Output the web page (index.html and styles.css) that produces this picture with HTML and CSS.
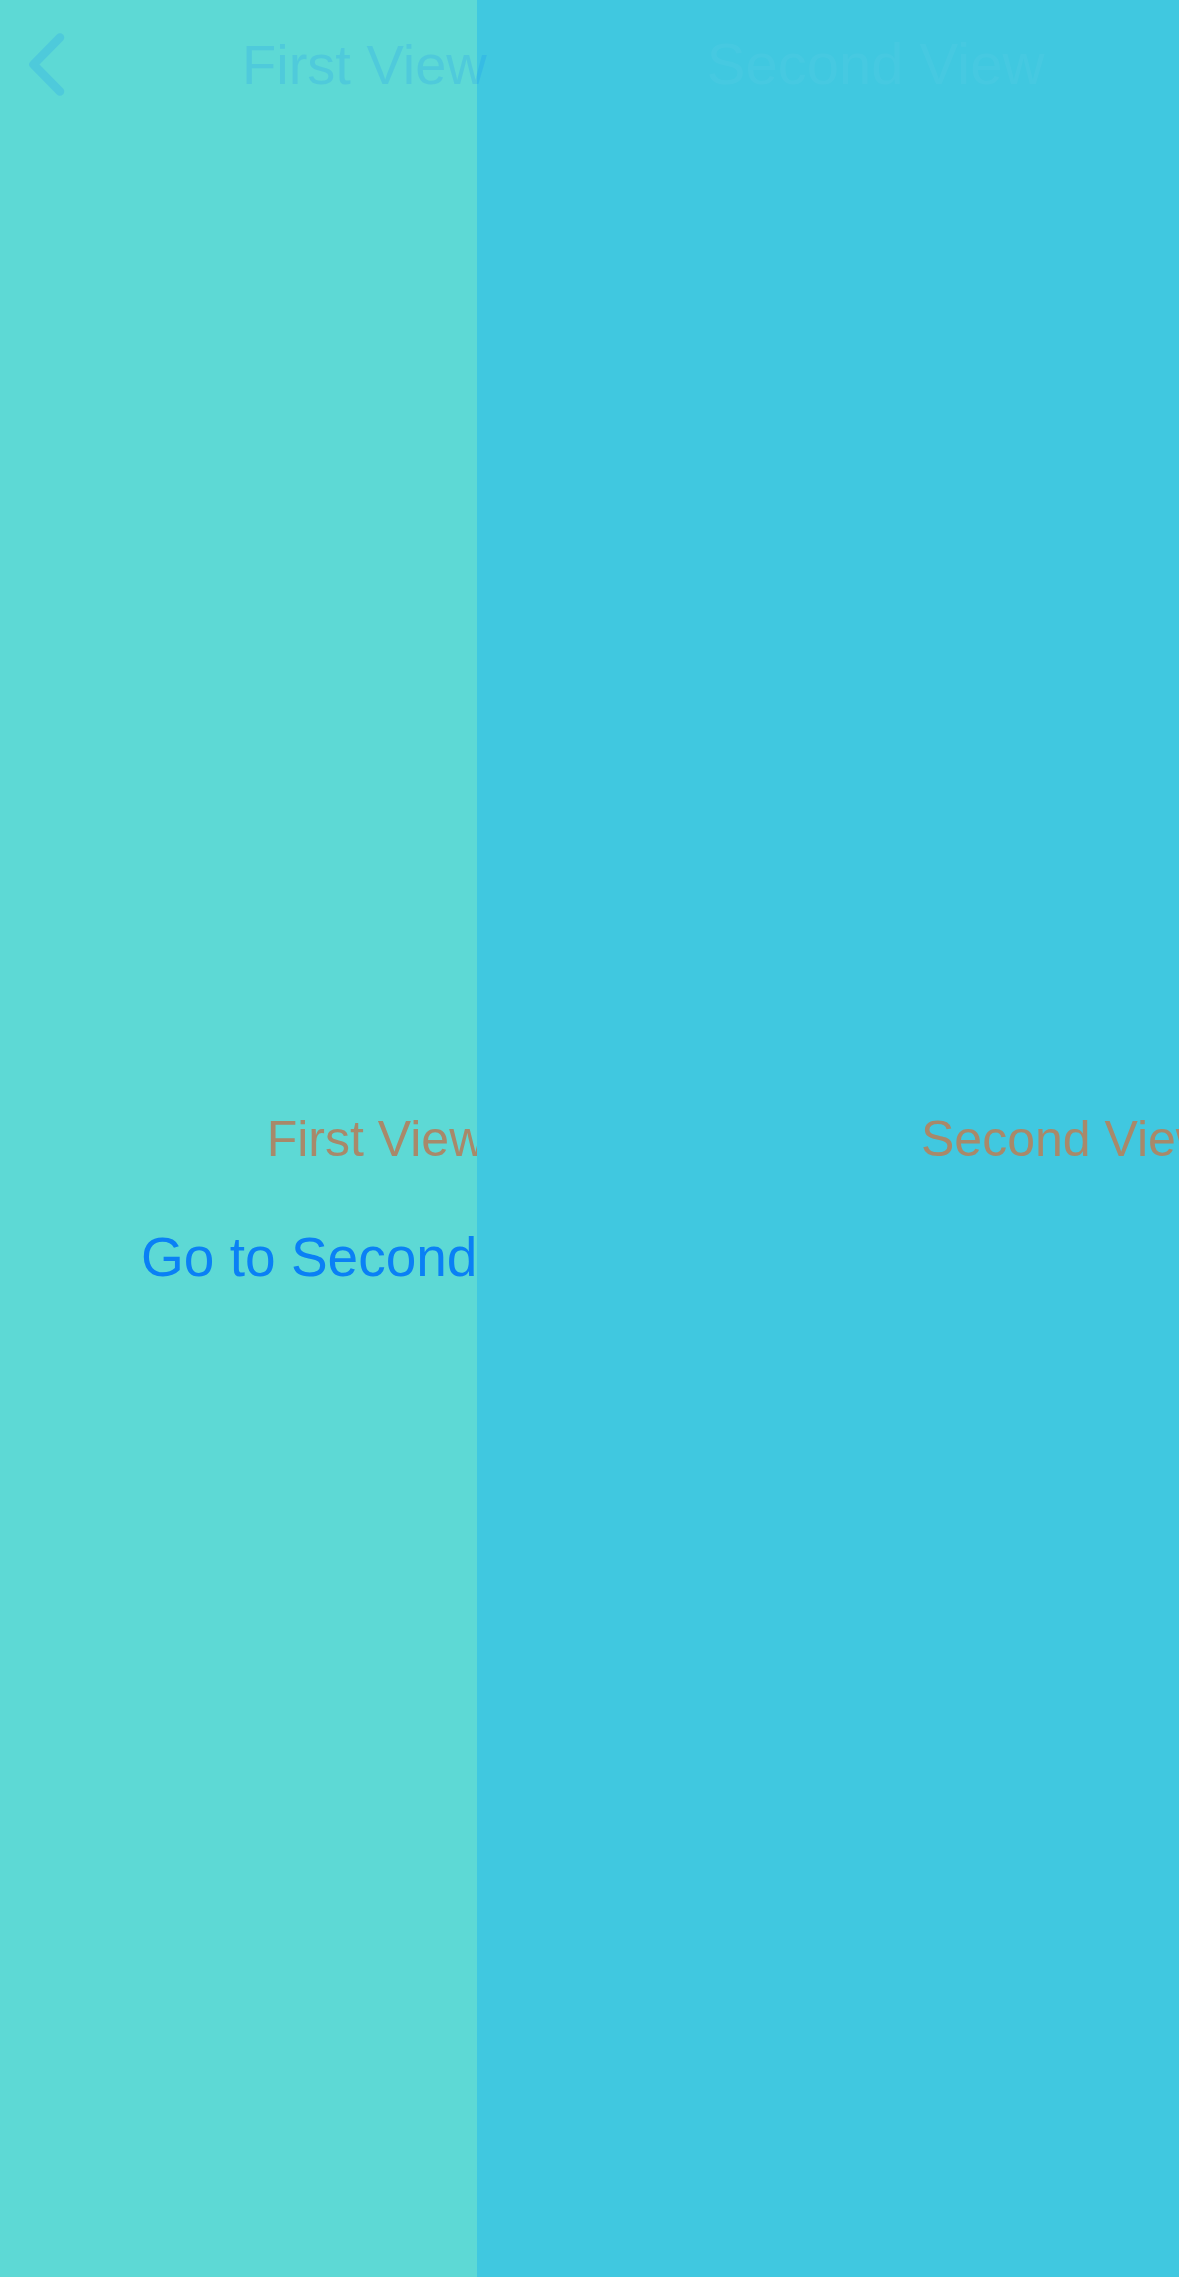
FILE: index.html
```html
<!DOCTYPE html>
<html lang="en">
<head>
<meta charset="utf-8">
<title>Navigation transition</title>
<link rel="stylesheet" href="styles.css">
</head>
<body>
<div class="screen">
  <div class="pane pane-first">
    <div class="view view-first">
      <div class="label">First View</div>
      <div class="button">Go to Second View</div>
    </div>
  </div>
  <div class="pane pane-second">
    <div class="view view-second">
      <div class="label">Second View</div>
    </div>
  </div>
  <div class="navbar">
    <svg class="back" width="36" height="64" viewBox="0 0 36 64">
      <path d="M31 4.5 L4.5 31.5 L31 58.5" fill="none" stroke="currentColor" stroke-width="8.5" stroke-linecap="round" stroke-linejoin="round"/>
    </svg>
    <div class="nav-title nav-title-first">First View</div>
    <div class="nav-title nav-title-second">Second View</div>
  </div>
</div>
</body>
</html>
```

FILE: styles.css
```css
html, body {
  margin: 0;
  padding: 0;
}
body {
  width: 1179px;
  height: 2277px;
  overflow: hidden;
  font-family: "Liberation Sans", Arial, sans-serif;
  background: #40c8e0;
}
.screen {
  position: relative;
  display: flex;
  width: 1179px;
  height: 2277px;
}
.pane {
  height: 100%;
  overflow: hidden;
  display: flex;
}
.pane-first {
  width: 477px;
  flex: 0 0 477px;
  background: #5dd9d5;
}
.pane-second {
  flex: 1 1 auto;
  background: #40c8e0;
}
.view {
  flex: 0 0 auto;
  display: flex;
  flex-direction: column;
  align-items: center;
  padding-top: 1114px;
}
.view-first {
  width: 752px;
}
.view-second {
  width: 1179px;
}
.label {
  font-size: 50px;
  line-height: 50px;
  color: #a8896a;
  white-space: nowrap;
}
.button {
  margin-top: 66px;
  font-size: 55px;
  line-height: 55px;
  color: #0a80f5;
  white-space: nowrap;
}
.navbar {
  position: absolute;
  top: 0;
  left: 0;
  right: 0;
  height: 130px;
  display: flex;
  align-items: flex-start;
  padding-left: 29px;
}
.back {
  display: block;
  margin-top: 33px;
  color: rgba(0, 122, 255, 0.16);
  flex: 0 0 auto;
}
.nav-title {
  white-space: nowrap;
  flex: 0 0 auto;
}
.nav-title-first {
  margin-left: 177px;
  margin-top: 37px;
  font-size: 56px;
  line-height: 56px;
  color: rgba(0, 122, 255, 0.15);
}
.nav-title-second {
  margin-left: 220px;
  margin-top: 35px;
  font-size: 58px;
  line-height: 58px;
  color: rgba(255, 255, 255, 0.035);
}
```
